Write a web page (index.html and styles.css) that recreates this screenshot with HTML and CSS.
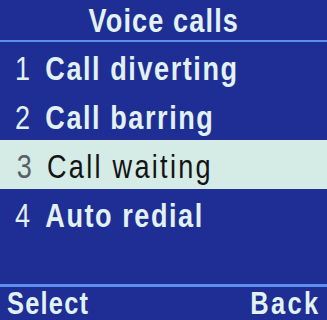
FILE: index.html
```html
<!DOCTYPE html>
<html lang="en">
<head>
  <meta charset="UTF-8">
  <meta name="viewport" content="width=device-width, initial-scale=1.0">
  <title>Voice calls</title>
  <link rel="stylesheet" href="styles.css">
</head>
<body>
  <div class="screen">
    <!-- Title bar -->
    <div class="title"><span class="narrow">Voice calls</span></div>

    <!-- Menu list -->
    <ul class="menu">
      <li><span class="narrow"><span class="num">1</span>Call diverting</span></li>
      <li><span class="narrow"><span class="num">2</span>Call barring</span></li>
      <li class="selected"><span class="narrow"><span class="num">3</span>Call waiting</span></li>
      <li><span class="narrow"><span class="num">4</span>Auto redial</span></li>
    </ul>

    <!-- Soft keys -->
    <div class="softkeys">
      <span class="narrow left">Select</span>
      <span class="narrow right">Back</span>
    </div>
  </div>
</body>
</html>
```

FILE: styles.css
```css
body {
  margin: 0;
  background-color: #1e2e94;
}
.screen {
  width: 327px;
  height: 320px;
  display: flex;
  flex-direction: column;
  overflow: hidden;
  background-color: #1e2e94;
  color: #e2f1f2;
  font-family: "Liberation Sans", Arial, sans-serif;
  font-weight: bold;
  font-size: 33px;
}
/* squeeze the glyphs to look like the phone's condensed font */
.narrow {
  display: inline-block;
  white-space: nowrap;
  transform: scaleX(0.82);
  transform-origin: left center;
}
.title {
  padding-top: 2px;
  line-height: 38px;
  text-align: center;
  letter-spacing: 1.4px;
  border-bottom: 2px solid #5a8ef0;
}
.title .narrow {
  transform-origin: center;
}
.menu {
  list-style: none;
  margin: 0;
  padding: 0;
  flex: 1;
}
.menu li {
  height: 49px;
  padding: 7px 0 0 15px;
  box-sizing: border-box;
  line-height: 40px;
  letter-spacing: 1.9px;
}
.num {
  display: inline-block;
  width: 37px;
  font-weight: normal;
  letter-spacing: 0;
}
.menu li.selected {
  background-color: #d5ebe6;
  color: #141414;
  font-weight: normal;
  letter-spacing: 2.8px;
}
.menu li.selected .num {
  color: #5a5f66;
  padding-left: 2px;
  width: 37px;
}
.softkeys {
  display: flex;
  justify-content: space-between;
  height: 36px;
  box-sizing: border-box;
  padding: 0 7px;
  font-size: 31px;
  line-height: 33px;
  border-top: 3px solid #5a8ef0;
}
.softkeys .left {
  letter-spacing: 1.5px;
}
.softkeys .right {
  letter-spacing: 2.8px;
  transform-origin: right center;
}
```
